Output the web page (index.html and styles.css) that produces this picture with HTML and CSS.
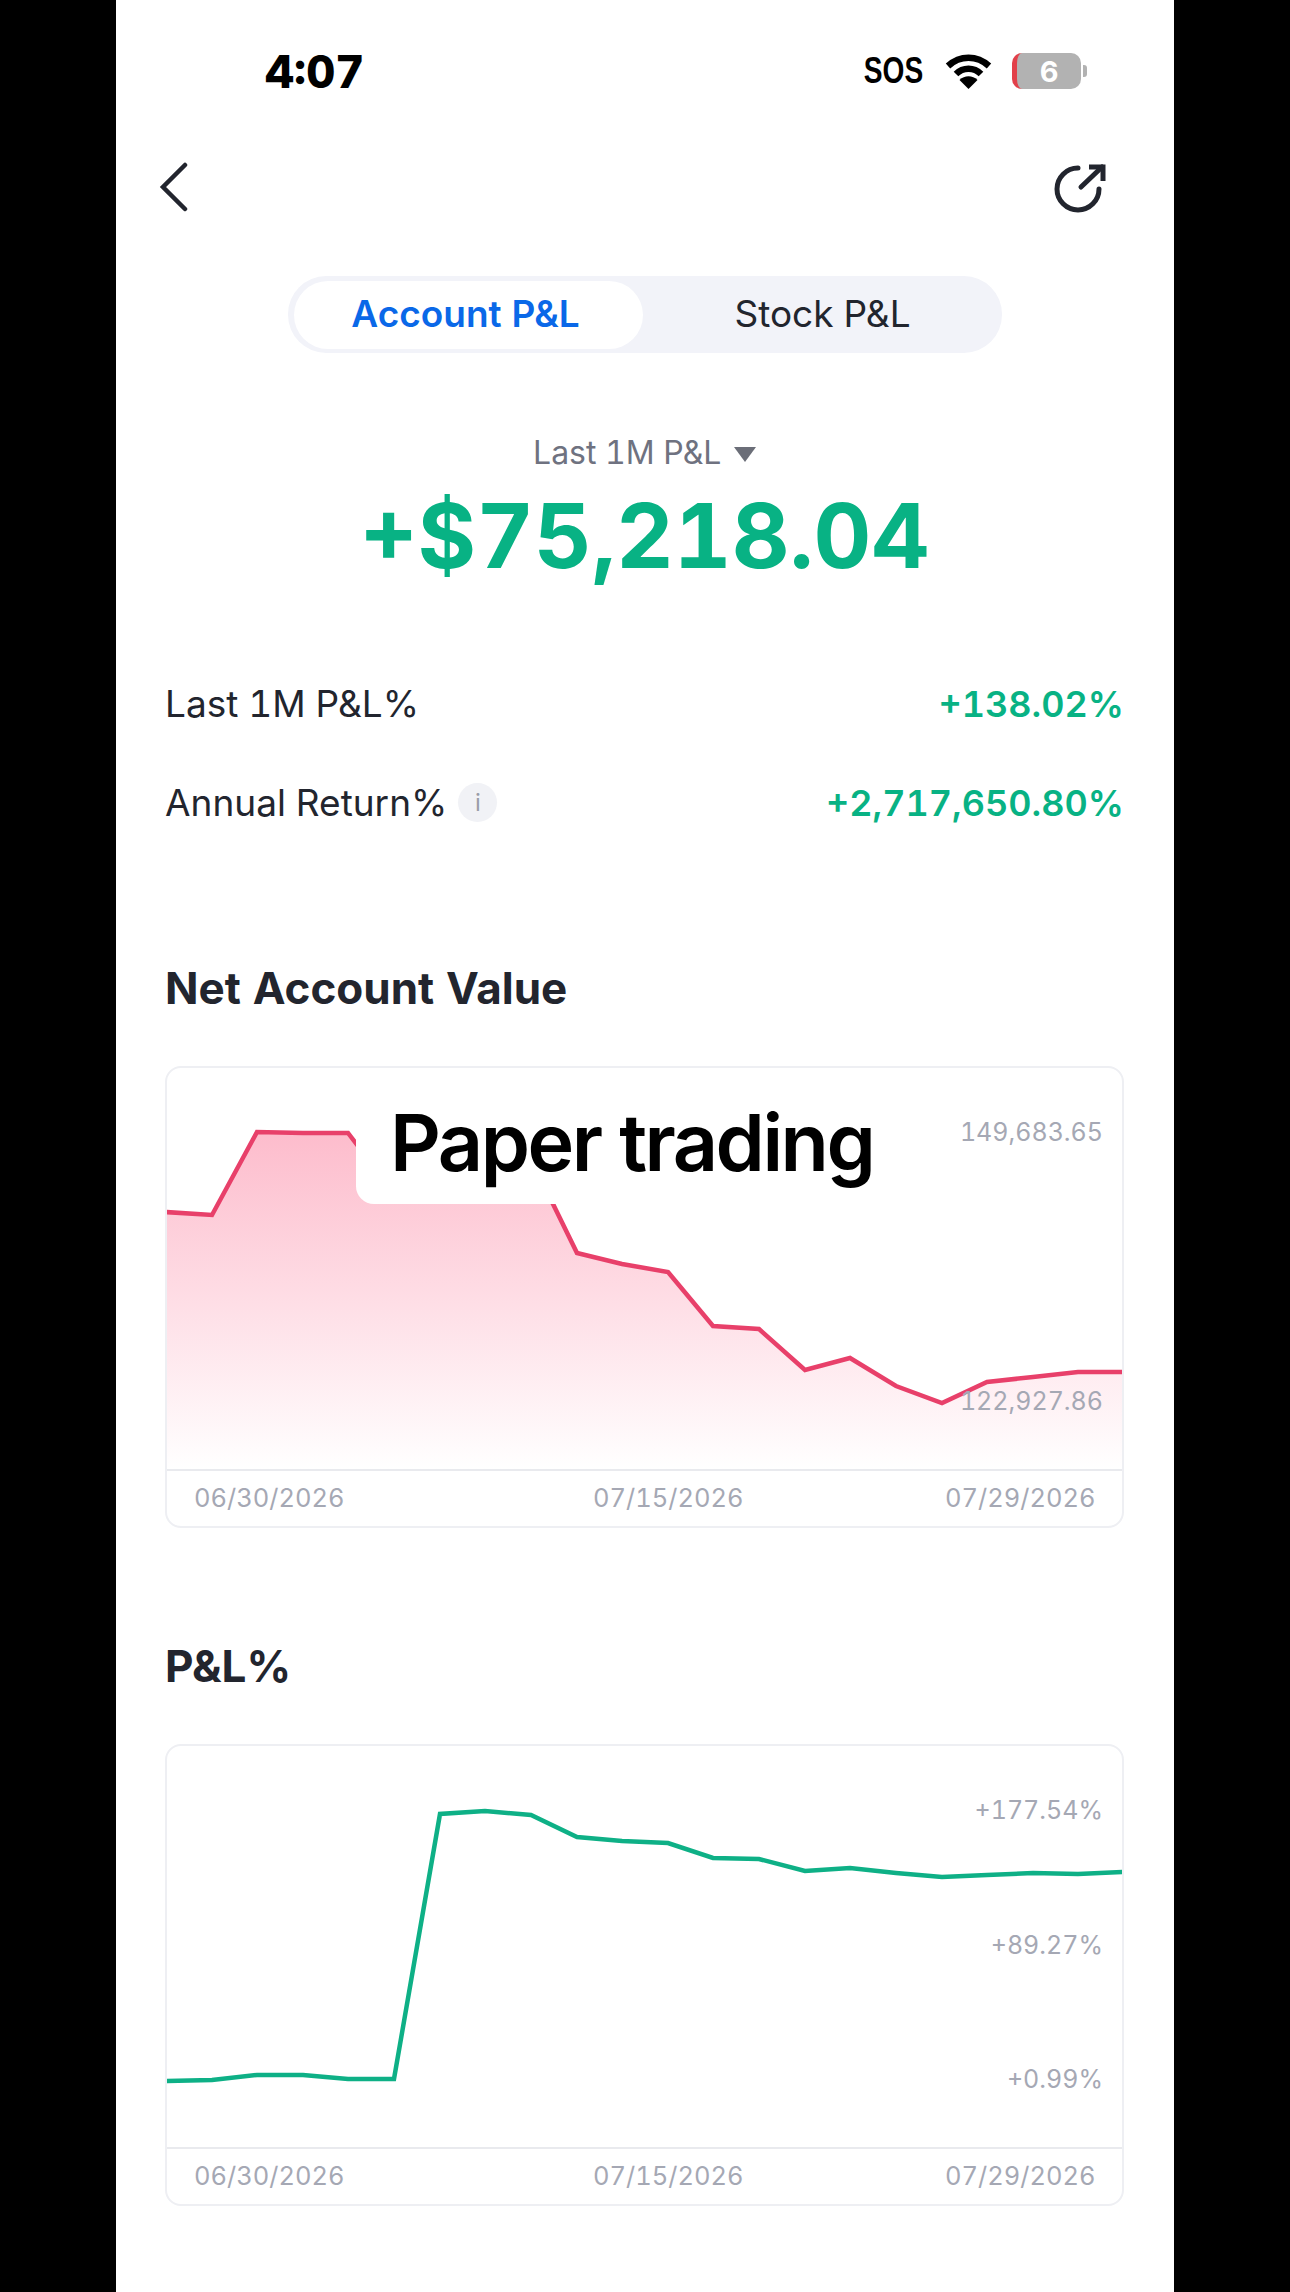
FILE: index.html
```html
<!DOCTYPE html>
<html lang="en">
<head>
  <meta charset="UTF-8" />
  <meta name="viewport" content="width=device-width, initial-scale=1" />
  <title>Account P&amp;L</title>
  <link rel="stylesheet" href="styles.css">
</head>
<body>
  <div class="screen">
    <div class="status-bar">
      <span class="time">4:07</span>
      <div class="status-icons">
        <span class="sos">SOS</span>
        <svg class="wifi" width="47" height="35" viewBox="0 0 47 35">
          <path d="M3 12 C15 1 32 1 44 12" fill="none" stroke="#000" stroke-width="6.5" stroke-linecap="butt"/>
          <path d="M11 20 C18 13 29 13 36 20" fill="none" stroke="#000" stroke-width="6.5" stroke-linecap="butt"/>
          <path d="M23.5 35 L14.5 26 C19.5 21 27.5 21 32.5 26 Z" fill="#000"/>
        </svg>
        <div class="battery">
          <div class="battery-body"><span>6</span></div>
          <div class="battery-tip"></div>
        </div>
      </div>
    </div>

    <!-- Back + share -->
    <div class="nav-bar">
      <svg width="30" height="50" viewBox="0 0 30 50">
        <path d="M27 3 L5 25 L27 47" fill="none" stroke="#22252e" stroke-width="4.5" stroke-linecap="round" stroke-linejoin="miter"/>
      </svg>
      <svg width="54" height="52" viewBox="0 0 54 52">
        <path d="M25 6 A21 21 0 1 0 46 27" fill="none" stroke="#22252e" stroke-width="5" stroke-linecap="round"/>
        <path d="M28 25 L49 5" fill="none" stroke="#22252e" stroke-width="5" stroke-linecap="round"/>
        <path d="M36 5 H50 V19" fill="none" stroke="#22252e" stroke-width="5"/>
      </svg>
    </div>

    <div class="tabs">
      <div class="tab active">Account P&amp;L</div>
      <div class="tab">Stock P&amp;L</div>
    </div>

    <div class="summary">
      <div class="period">Last 1M P&amp;L <span class="caret"></span></div>
      <div class="amount">+$75,218.04</div>
    </div>

    <div class="stat-row">
      <span class="stat-label">Last 1M P&amp;L%</span>
      <span class="stat-value">+138.02%</span>
    </div>
    <div class="stat-row">
      <span class="stat-label">Annual Return% <span class="info">i</span></span>
      <span class="stat-value">+2,717,650.80%</span>
    </div>

    <h2 class="net-title">Net Account Value</h2>
    <div class="chart">
      <div class="plot">
        <svg width="955" height="401" viewBox="0 0 955 401">
          <defs>
            <linearGradient id="pink" gradientUnits="userSpaceOnUse" x1="0" y1="64" x2="0" y2="401">
              <stop offset="0" stop-color="#fdbccc"/>
              <stop offset="1" stop-color="#ffffff"/>
            </linearGradient>
          </defs>
          <polygon fill="url(#pink)" points="-2,144 45,147 90,64 136,65 181,65 227,125 273,115 318,105 364,91 410,185 455,196 501,204 546,258 592,261 638,302 683,290 729,318 775,335 820,314 866,309 911,304 957,304 957,401 -2,401"/>
          <polyline fill="none" stroke="#e8406a" stroke-width="4.5" points="-2,144 45,147 90,64 136,65 181,65 227,125 273,115 318,105 364,91 410,185 455,196 501,204 546,258 592,261 638,302 683,290 729,318 775,335 820,314 866,309 911,304 957,304"/>
        </svg>
        <span class="y-label y-top">149,683.65</span>
        <span class="y-label y-low">122,927.86</span>
        <div class="paper-badge">Paper trading</div>
      </div>
      <div class="dates">
        <span>06/30/2026</span><span>07/15/2026</span><span>07/29/2026</span>
      </div>
    </div>

    <h2 class="pl-title">P&amp;L%</h2>
    <div class="chart">
      <div class="plot">
        <svg width="955" height="401" viewBox="0 0 955 401">
          <polyline fill="none" stroke="#0eb086" stroke-width="4.5" points="-2,335 45,334 90,329 136,329 181,333 227,333 273,68 318,65 364,69 410,91 455,95 501,97 546,112 592,113 638,125 683,122 729,127 775,131 820,129 866,127 911,128 957,126"/>
        </svg>
        <span class="y-label p-top">+177.54%</span>
        <span class="y-label p-mid">+89.27%</span>
        <span class="y-label p-low">+0.99%</span>
      </div>
      <div class="dates">
        <span>06/30/2026</span><span>07/15/2026</span><span>07/29/2026</span>
      </div>
    </div>
  </div>
</body>
</html>
```

FILE: styles.css
```css
body {
  margin: 0;
  background: #000;
  font-family: Inter, "Liberation Sans", sans-serif;
  font-variant-numeric: tabular-nums;
  color: #22252e;
}
.screen {
  width: 1058px;
  height: 2292px;
  margin-left: 116px;
  padding: 0 50px 0 49px;
  box-sizing: border-box;
  background: #fff;
  overflow: hidden;
}

/* --- status bar --- */
.status-bar {
  height: 140px;
  padding: 50px 0 0 100px;
  box-sizing: border-box;
  display: flex;
  justify-content: space-between;
  align-items: flex-start;
}
.time {
  font-size: 45px;
  font-weight: 800;
  line-height: 44px;
  color: #000;
}
.status-icons {
  display: flex;
  align-items: center;
  gap: 20px;
  margin-right: 37px;
  margin-top: 3px;
}
.sos {
  font-family: "Liberation Sans", sans-serif;
  font-size: 37px;
  font-weight: 700;
  line-height: 36px;
  color: #000;
  margin-right: 2px;
  transform: scaleX(0.76);
  transform-origin: right center;
}
.battery {
  display: flex;
  align-items: center;
  gap: 2px;
}
.battery-body {
  width: 69px;
  height: 36px;
  border-radius: 10px;
  background: #b2b2b2;
  border-left: 5px solid #e2404a;
  box-sizing: border-box;
  display: flex;
  align-items: center;
  justify-content: center;
  color: #fff;
  font-size: 29px;
  font-weight: 700;
}
.battery-tip {
  width: 4px;
  height: 12px;
  background: #b2b2b2;
  border-radius: 0 3px 3px 0;
}

/* --- nav --- */
.nav-bar {
  height: 136px;
  margin-left: -7px;
  padding: 22px 17px 0 0;
  box-sizing: border-box;
  display: flex;
  justify-content: space-between;
  align-items: flex-start;
}

/* --- tabs --- */
.tabs {
  width: 714px;
  height: 77px;
  margin-left: 123px;
  padding: 5px 0 4px 6px;
  box-sizing: border-box;
  background: #f2f3f9;
  border-radius: 38px;
  display: flex;
}
.tab {
  flex: 1;
  display: flex;
  align-items: center;
  justify-content: center;
  padding-bottom: 3px;
  box-sizing: border-box;
  font-size: 37px;
}
.tab.active {
  flex: 0 0 349px;
  padding-right: 6px;
  background: #fff;
  border-radius: 34px;
  color: #0a68e8;
  font-weight: 600;
}

/* --- summary --- */
.summary {
  text-align: center;
  margin-top: 76px;
  height: 225px;
}
.period {
  font-size: 32px;
  line-height: 48px;
  color: #6f7280;
}
.caret {
  display: inline-block;
  width: 0;
  height: 0;
  margin-left: 4px;
  position: relative;
  top: -2px;
  border-left: 11px solid transparent;
  border-right: 11px solid transparent;
  border-top: 15px solid #6b6e78;
}
.amount {
  margin-top: 9px;
  font-size: 89.5px;
  font-weight: 700;
  line-height: 100px;
  color: #08b284;
}
.stat-row {
  display: flex;
  justify-content: space-between;
  align-items: center;
  height: 99px;
  font-size: 37px;
}
.stat-label {
  display: flex;
  align-items: center;
  gap: 11px;
}
.stat-value {
  color: #08b284;
  font-size: 36px;
  font-weight: 600;
}
.info {
  width: 39px;
  height: 39px;
  border-radius: 50%;
  background: #f1f2f6;
  color: #9a9da8;
  font-size: 24px;
  display: flex;
  align-items: center;
  justify-content: center;
}

/* --- charts --- */
h2 {
  margin: 0;
  font-size: 44px;
  font-weight: 700;
  line-height: 50px;
}
.net-title {
  margin-top: 111px;
  margin-bottom: 53px;
}
.pl-title {
  margin-top: 113px;
  margin-bottom: 53px;
}
.chart {
  width: 959px;
  height: 462px;
  box-sizing: border-box;
  border: 2px solid #eeeff3;
  border-radius: 16px;
  overflow: hidden;
}
.plot {
  position: relative;
  height: 401px;
  border-bottom: 2px solid #e9eaee;
}
.plot svg {
  display: block;
}
.y-label {
  position: absolute;
  right: 19px;
  font-size: 25px;
  line-height: 32px;
  color: #a5a8b4;
}
.y-top { top: 48px; }
.y-low { top: 317px; }
.p-top { top: 48px; }
.p-mid { top: 183px; }
.p-low { top: 317px; }
.paper-badge {
  position: absolute;
  left: 189px;
  top: -10px;
  width: 560px;
  height: 146px;
  padding: 34px 0 0 34px;
  box-sizing: border-box;
  background: #fff;
  border-bottom-left-radius: 18px;
  color: #000;
  font-size: 79px;
  font-weight: 600;
  line-height: 100px;
  letter-spacing: -2.5px;
}
.dates {
  display: grid;
  grid-template-columns: 399px 352px auto;
  padding-left: 27px;
  font-size: 25.5px;
  line-height: 54px;
  color: #a5a8b4;
}
```
